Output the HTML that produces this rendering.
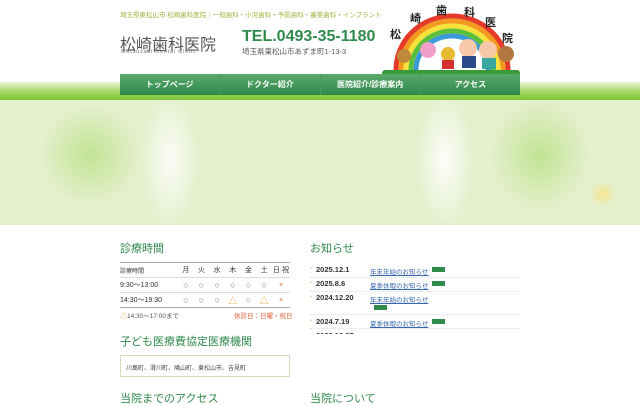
<!DOCTYPE html>
<html><head><meta charset="utf-8"><style>
*{margin:0;padding:0;box-sizing:border-box}
body{width:640px;height:400px;overflow:hidden;background:#fff;font-family:"Liberation Sans","Noto Sans CJK JP",sans-serif;position:relative}
.abs{position:absolute}
.band{left:0;top:82px;width:640px;height:18px;background:linear-gradient(#eaf6d8,#a6d860 55%,#7cc43a)}
.nav{left:120px;top:74px;width:400px;height:23px;background:linear-gradient(#5aa86a,#2f8a4c);display:flex;border-bottom:2px solid #8cca4a}
.nav div{flex:1;color:#fff;font-size:8px;font-weight:bold;text-align:center;line-height:22px;border-right:1px solid #4b9a5e}
.nav div:last-child{border:none}
.hero{left:0;top:100px;width:640px;height:125px;background:
radial-gradient(ellipse 50px 50px at 90px 55px,rgba(170,220,110,.6),transparent),
radial-gradient(ellipse 30px 70px at 170px 60px,rgba(255,255,255,.85),transparent),
radial-gradient(ellipse 50px 55px at 540px 55px,rgba(170,220,110,.6),transparent),
radial-gradient(ellipse 30px 70px at 445px 60px,rgba(255,255,255,.9),transparent),
radial-gradient(circle 13px at 603px 94px,rgba(255,225,120,.7),transparent),
#e4efcc}
h2{position:absolute;font-size:11px;font-weight:normal;color:#2f8a4c}
table{border-collapse:collapse;font-size:7px;color:#333}
td{height:15px;border-bottom:1px solid #ddd;text-align:center}
.o{color:#777;font-size:9px}.t{color:#e7a22b;font-size:9px}.x{color:#e0603a}
.news{font-size:7.5px;color:#333}
.news .r{position:absolute;left:0;width:210px;border-bottom:1px dotted #ddd}
.news a{color:#3a68b0;text-decoration:underline;position:absolute;left:60px;font-size:6.5px}
.new{display:inline-block;width:13px;height:5px;background:#2f8a4c;vertical-align:middle;margin-left:2px}
.d{position:absolute;left:6px;font-weight:bold}
.d:before{content:"▪";color:#b8d070;font-size:5px;position:absolute;left:-6px;top:1px}
</style></head><body>
<div class="abs" style="left:120px;top:9px;font-size:6.5px;color:#9cb53a">埼玉県東松山市 松崎歯科医院｜一般歯科・小児歯科・予防歯科・審美歯科・インプラント</div>
<div class="abs" style="left:120px;top:31px;font-size:16px;color:#555">松崎歯科医院</div>
<div class="abs" style="left:121px;top:49px;font-size:5.5px;color:#777;letter-spacing:.8px">Matsuzaki Dental Clinic</div>
<div class="abs" style="left:242px;top:28px;font-size:16px;color:#2f8a4c;font-weight:bold">TEL.0493-35-1180</div>
<div class="abs" style="left:242px;top:46px;font-size:7.5px;color:#555">埼玉県東松山市あずま町1-13-3</div>
<svg class="abs" style="left:382px;top:0" width="138" height="76" viewBox="0 0 138 76">
<g fill="none" stroke-width="5">
<path d="M14 70 A56 54 0 0 1 126 70" stroke="#e53a2a"/>
<path d="M19 70 A51 49 0 0 1 121 70" stroke="#f39a1e"/>
<path d="M24 70 A46 44 0 0 1 116 70" stroke="#f5e23a"/>
<path d="M29 70 A41 39 0 0 1 111 70" stroke="#5cbf3a"/>
<path d="M34 70 A36 34 0 0 1 106 70" stroke="#3a9ad8"/>
</g>
<g font-size="11" font-weight="bold" fill="#222" font-family="Noto Sans CJK JP">
<text x="8" y="38">松</text><text x="28" y="22">崎</text><text x="54" y="14">歯</text><text x="82" y="16">科</text><text x="103" y="26">医</text><text x="120" y="42">院</text></g>
<rect x="0" y="70" width="138" height="6" rx="3" fill="#3a9a3a"/>
<circle cx="22" cy="56" r="7" fill="#c08a3a"/><circle cx="46" cy="50" r="8" fill="#f0a0c8"/><circle cx="66" cy="54" r="7" fill="#e8b830"/>
<circle cx="86" cy="48" r="9" fill="#f8c8a8"/><circle cx="106" cy="50" r="9" fill="#f8c8a8"/><circle cx="124" cy="54" r="8" fill="#b07840"/>
<rect x="80" y="56" width="14" height="12" fill="#2a4a8a"/><rect x="100" y="58" width="14" height="11" fill="#3aa8a0"/><rect x="60" y="60" width="12" height="9" fill="#d83030"/>
</svg>
<div class="abs band"></div>
<div class="abs nav"><div>トップページ</div><div>ドクター紹介</div><div>医院紹介/診療案内</div><div>アクセス</div></div>
<div class="abs hero"></div>
<h2 style="left:120px;top:240px">診療時間</h2>
<table class="abs" style="left:120px;top:262px;width:170px;border-top:1px solid #aaa;table-layout:fixed">
<colgroup><col style="width:58px"><col><col><col><col><col><col><col style="width:18px"></colgroup>
<tr><td style="text-align:left;font-size:6px">診療時間</td><td>月</td><td>火</td><td>水</td><td>木</td><td>金</td><td>土</td><td>日·祝</td></tr>
<tr><td style="text-align:left">9:30〜13:00</td><td class="o">○</td><td class="o">○</td><td class="o">○</td><td class="o">○</td><td class="o">○</td><td class="o">○</td><td class="x">×</td></tr>
<tr><td style="text-align:left;border-bottom:1px solid #aaa">14:30〜19:30</td><td class="o" style="border-bottom:1px solid #aaa">○</td><td class="o" style="border-bottom:1px solid #aaa">○</td><td class="o" style="border-bottom:1px solid #aaa">○</td><td class="t" style="border-bottom:1px solid #aaa">△</td><td class="o" style="border-bottom:1px solid #aaa">○</td><td class="t" style="border-bottom:1px solid #aaa">△</td><td class="x" style="border-bottom:1px solid #aaa">×</td></tr>
</table>
<div class="abs" style="left:120px;top:310px;font-size:6.5px;color:#555"><span class="t" style="font-size:7px">△</span>14:30〜17:00まで</div>
<div class="abs" style="left:234px;top:310px;font-size:6.5px;color:#e0603a">休診日：日曜・祝日</div>
<h2 style="left:120px;top:333px">子ども医療費協定医療機関</h2>
<div class="abs" style="left:120px;top:355px;width:170px;height:22px;border:1px solid #d8dcc0;font-size:6px;color:#444;padding:7px 5px">川島町、滑川町、鳩山町、東松山市、吉見町</div>
<h2 style="left:120px;top:390px">当院までのアクセス</h2>
<h2 style="left:310px;top:240px">お知らせ</h2>
<div class="abs news" style="left:310px;top:264px;width:210px;height:70px;overflow:hidden">
<div class="r" style="top:0;height:14px"><span class="d" style="top:1px">2025.12.1</span><a style="top:2px">年末年始のお知らせ</a><span class="new" style="position:absolute;left:120px;top:3px"></span></div>
<div class="r" style="top:14px;height:14px"><span class="d" style="top:1px">2025.8.6</span><a style="top:2px">夏季休暇のお知らせ</a><span class="new" style="position:absolute;left:120px;top:3px"></span></div>
<div class="r" style="top:28px;height:23px"><span class="d" style="top:1px">2024.12.20</span><a style="top:2px">年末年始のお知らせ</a><span class="new" style="position:absolute;left:62px;top:13px"></span></div>
<div class="r" style="top:51px;height:14px"><span class="d" style="top:2px">2024.7.19</span><a style="top:3px">夏季休暇のお知らせ</a><span class="new" style="position:absolute;left:120px;top:4px"></span></div>
<div class="r" style="top:65px;height:14px"><span class="d" style="top:2px">2023.12.27</span></div>
</div>
<h2 style="left:310px;top:390px">当院について</h2>
</body></html>
